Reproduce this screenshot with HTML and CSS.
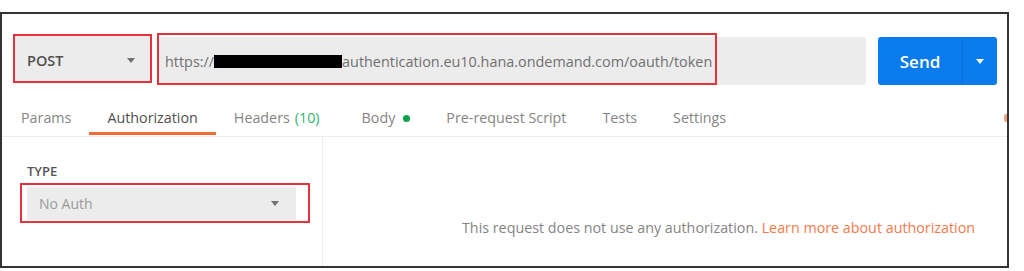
FILE: index.html
```html
<!DOCTYPE html>
<html lang="en">
<head>
  <meta charset="UTF-8">
  <meta name="viewport" content="width=device-width, initial-scale=1.0">
  <title>Request - Authorization</title>
  <link rel="stylesheet" href="styles.css">
</head>
<body>
  <div class="frame">
    <div class="request-row">
      <div class="method">
        <span>POST</span>
        <span class="caret"></span>
      </div>
      <div class="url">
        <span class="url-text">https://<span class="redact"></span>authentication.eu10.hana.ondemand.com/oauth/token</span>
        <span class="url-mark"></span>
      </div>
      <div class="send">
        <span class="send-label">Send</span>
        <span class="send-more"><span class="caret caret-white"></span></span>
      </div>
    </div>

    <div class="tabs">
      <div class="tab">Params</div>
      <div class="tab active">Authorization</div>
      <div class="tab">Headers <span class="count">(10)</span></div>
      <div class="tab tab-body">Body <span class="dot"></span></div>
      <div class="tab">Pre-request Script</div>
      <div class="tab">Tests</div>
      <div class="tab">Settings</div>
      <span class="tab-edge"></span>
    </div>

    <div class="auth">
      <div class="auth-side">
        <div class="type-label">TYPE</div>
        <div class="type-mark">
          <div class="type-select">
            <span>No Auth</span>
            <span class="caret"></span>
          </div>
        </div>
      </div>
      <div class="auth-main">
        This request does not use any authorization. <a href="#" class="learn">Learn more about authorization</a>
      </div>
    </div>
  </div>
</body>
</html>
```

FILE: styles.css
```css
body {
  margin: 0;
  background-color: #ffffff;
  font-family: "Open Sans", "Liberation Sans", sans-serif;
  font-size: 14.3px;
  color: #858585;
}
.frame {
  box-sizing: border-box;
  width: 1009px;
  height: 256px;
  margin-top: 12px;
  border: 2px solid #333333;
  overflow: hidden;
  position: relative;
}
.request-row {
  display: flex;
  align-items: flex-start;
  padding: 20px 0 0 11px;
}
.caret {
  width: 0;
  height: 0;
  border-left: 4px solid transparent;
  border-right: 4px solid transparent;
  border-top: 5px solid #707070;
}
.caret-white {
  border-top-color: #ffffff;
}
.method {
  box-sizing: border-box;
  width: 139px;
  height: 49px;
  border: 2px solid #e6323c;
  background-color: #ececec;
  display: flex;
  align-items: center;
  justify-content: space-between;
  padding: 4px 15px 0 12px;
  font-size: 14.5px;
  font-weight: 600;
  color: #505050;
}
.url {
  position: relative;
  box-sizing: border-box;
  width: 709px;
  height: 48px;
  margin: 3px 0 0 5px;
  background-color: #ececec;
  border-radius: 3px;
  display: flex;
  align-items: center;
  padding-left: 8px;
  font-size: 14.4px;
  color: #707070;
}
.url-text {
  display: flex;
  align-items: center;
  white-space: nowrap;
}
.redact {
  display: inline-block;
  width: 128px;
  height: 13px;
  background-color: #000000;
}
.url-mark {
  position: absolute;
  left: 0;
  top: -4px;
  width: 560px;
  height: 52px;
  box-sizing: border-box;
  border: 2px solid #e6323c;
}
.send {
  display: flex;
  width: 119px;
  height: 48px;
  margin: 3px 0 0 12px;
  background-color: #097bed;
  border-radius: 3px;
  color: #ffffff;
}
.send-label {
  width: 84px;
  display: flex;
  align-items: center;
  justify-content: center;
  font-size: 17px;
  font-weight: 600;
  border-right: 1px solid #0a6fd4;
}
.send-more {
  flex: 1;
  display: flex;
  align-items: center;
  justify-content: center;
}
.tabs {
  display: flex;
  height: 36px;
  margin-top: 15px;
  padding-left: 1px;
  border-bottom: 1px solid #ededed;
  position: relative;
}
.tab {
  box-sizing: border-box;
  height: 35px;
  padding: 4px 18px 0;
  line-height: 28px;
  border-bottom: 3px solid transparent;
  display: flex;
  align-items: center;
  white-space: nowrap;
}
.tab.active {
  color: #505050;
  border-bottom-color: #f26b3a;
}
.tab-body {
  margin-left: 6px;
}
.count {
  color: #30b66e;
  margin-left: 5px;
}
.dot {
  display: inline-block;
  width: 7px;
  height: 7px;
  border-radius: 50%;
  background-color: #0ca24a;
  margin-left: 8px;
}
.tab-edge {
  position: absolute;
  left: 1002px;
  top: 14px;
  width: 3px;
  height: 8px;
  border-radius: 2px 0 0 2px;
  background-color: #f5a07e;
}
.auth {
  display: flex;
  height: 129px;
}
.auth-side {
  box-sizing: border-box;
  width: 321px;
  padding: 28px 0 0 18px;
  border-right: 1px solid #ececec;
}
.type-label {
  font-size: 13px;
  font-weight: 600;
  line-height: 12px;
  color: #555555;
  margin: 0 0 6px 7px;
}
.type-mark {
  box-sizing: border-box;
  width: 290px;
  border: 2px solid #e6323c;
  padding: 2px 12px 1px 5px;
}
.type-select {
  height: 33px;
  background-color: #ececec;
  display: flex;
  align-items: center;
  justify-content: space-between;
  padding: 0 17px 0 12px;
  color: #9a9a9a;
  font-size: 14px;
}
.auth-main {
  flex: 1;
  padding: 82px 0 0 139px;
  line-height: 18px;
  white-space: nowrap;
}
.learn {
  color: #f37a4d;
  text-decoration: none;
}
```
